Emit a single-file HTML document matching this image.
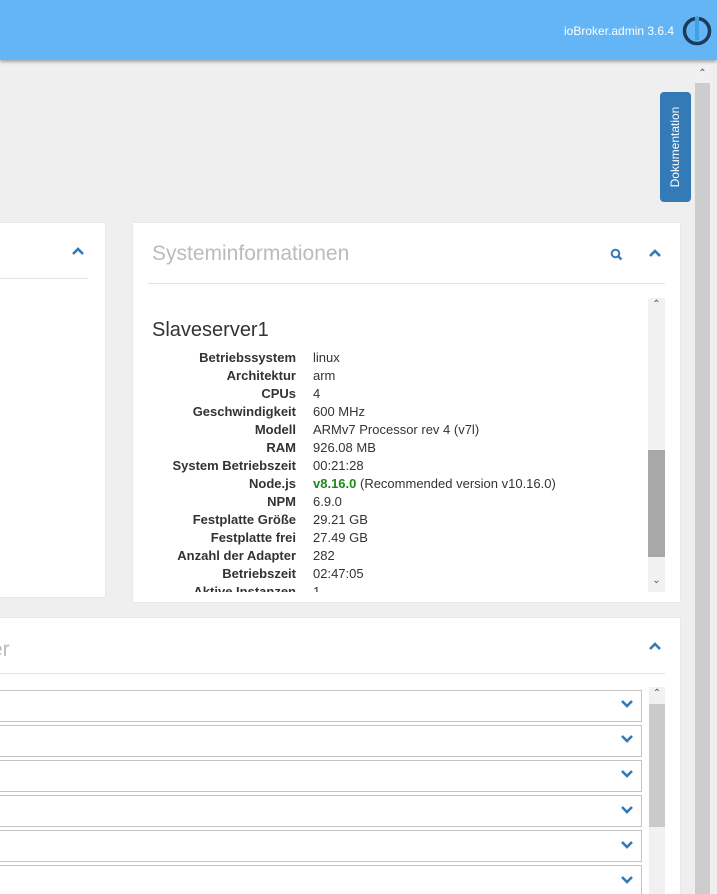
<!DOCTYPE html>
<html style="overflow:hidden;width:717px;height:894px"><head><meta charset="utf-8"><style>
*{box-sizing:border-box;margin:0;padding:0}
body{width:717px;height:894px;overflow:hidden;background:#efefef;font-family:"Liberation Sans",Arial,sans-serif;position:relative}
.hdr{position:absolute;left:0;top:0;width:717px;height:60px;background:#64b5f6;box-shadow:0 2px 3px rgba(0,0,0,.3);z-index:2}
.hdr .t{position:absolute;left:564px;top:24px;color:#fff;font-size:12px}
.card{position:absolute;background:#fff;box-shadow:0 0 1px rgba(0,0,0,.15);overflow:hidden}
.abs{position:absolute}
.ttl{color:#bbb;font-size:21px}
.div{position:absolute;height:1px;background:#e4e4e4}
table{border-collapse:collapse;font-size:13px;color:#333}
td{height:18px;padding:0;line-height:18px;white-space:nowrap}
td.l{font-weight:bold;text-align:right;width:180px;padding-right:17px}
.row{position:absolute;left:-1px;width:643px;height:32px;border:1px solid #c4c4c4;background:#fff}
</style></head><body>
<div class="hdr"><span class="t">ioBroker.admin 3.6.4</span>
<svg class="abs" style="left:680px;top:14px" width="34" height="34" viewBox="0 0 34 34"><circle cx="17" cy="17" r="12.5" fill="none" stroke="#1c3a5a" stroke-width="3.5"/><rect x="15" y="3" width="4" height="23" fill="#3fa1e0"/></svg>
</div>
<div class="abs" style="left:695px;top:63px;width:15px;height:831px;background:#cdcdcd"></div>
<div class="abs" style="left:695px;top:63px;width:15px;height:20px;background:#f0f0f0;color:#555;font-size:10px;text-align:center;line-height:22px">&#8963;</div>
<div class="abs" style="left:660px;top:92px;width:31px;height:110px;background:#337ab7;border-radius:4px"></div>
<div class="abs" style="left:675px;top:147px;transform:translate(-50%,-50%) rotate(-90deg);color:#fff;font-size:12px;white-space:nowrap">Dokumentation</div>
<div class="card" style="left:-5px;top:223px;width:110px;height:374px">
<svg class="abs" style="left:76px;top:23px" width="14" height="10" viewBox="0 0 14 10"><path d="M2 8L7 3L12 8" fill="none" stroke="#337ab7" stroke-width="2.6"/></svg>
<div class="div" style="left:0;top:55px;width:93px"></div></div>
<div class="card" style="left:133px;top:223px;width:547px;height:379px">
<div class="abs ttl" style="left:19px;top:19px">Systeminformationen</div>
<svg class="abs" style="left:477px;top:25px" width="13" height="13" viewBox="0 0 13 13"><circle cx="5.5" cy="5.5" r="3.8" fill="none" stroke="#337ab7" stroke-width="2"/><path d="M8.3 8.3L11.5 11.5" stroke="#337ab7" stroke-width="2.4"/></svg>
<svg class="abs" style="left:515px;top:25px" width="14" height="10" viewBox="0 0 14 10"><path d="M2 8L7 3L12 8" fill="none" stroke="#337ab7" stroke-width="2.6"/></svg>
<div class="div" style="left:15px;top:60px;width:517px"></div>
<div class="abs" style="left:515px;top:75px;width:17px;height:294px;background:#f1f1f1"></div>
<div class="abs" style="left:515px;top:227px;width:17px;height:107px;background:#a8a8a8"></div>
<div class="abs" style="left:515px;top:76px;width:17px;color:#555;font-size:10px;text-align:center">&#8963;</div>
<div class="abs" style="left:515px;top:352px;width:17px;color:#555;font-size:10px;text-align:center">&#8964;</div>
<div class="abs" style="left:0;top:75px;width:515px;height:294px;overflow:hidden">
<div class="abs" style="left:19px;top:21px;font-size:20px;color:#333">Slaveserver1</div>
<table class="abs" style="left:0;top:51px">
<tr><td class="l">Betriebssystem</td><td>linux</td></tr>
<tr><td class="l">Architektur</td><td>arm</td></tr>
<tr><td class="l">CPUs</td><td>4</td></tr>
<tr><td class="l">Geschwindigkeit</td><td>600 MHz</td></tr>
<tr><td class="l">Modell</td><td>ARMv7 Processor rev 4 (v7l)</td></tr>
<tr><td class="l">RAM</td><td>926.08 MB</td></tr>
<tr><td class="l">System Betriebszeit</td><td>00:21:28</td></tr>
<tr><td class="l">Node.js</td><td><b style="color:#1e8a1e">v8.16.0</b> (Recommended version v10.16.0)</td></tr>
<tr><td class="l">NPM</td><td>6.9.0</td></tr>
<tr><td class="l">Festplatte Größe</td><td>29.21 GB</td></tr>
<tr><td class="l">Festplatte frei</td><td>27.49 GB</td></tr>
<tr><td class="l">Anzahl der Adapter</td><td>282</td></tr>
<tr><td class="l">Betriebszeit</td><td>02:47:05</td></tr>
<tr><td class="l">Aktive Instanzen</td><td>1</td></tr>
</table></div>
</div>
<div class="card" style="left:-5px;top:618px;width:685px;height:276px">
<div class="abs ttl" style="left:-4px;top:20px">er</div>
<svg class="abs" style="left:653px;top:23px" width="14" height="10" viewBox="0 0 14 10"><path d="M2 8L7 3L12 8" fill="none" stroke="#337ab7" stroke-width="2.6"/></svg>
<div class="div" style="left:0;top:55px;width:670px"></div>
<div class="abs" style="left:654px;top:69px;width:16px;height:230px;background:#f1f1f1"></div>
<div class="abs" style="left:654px;top:86px;width:16px;height:123px;background:#cacaca"></div>
<div class="abs" style="left:654px;top:70px;width:16px;color:#555;font-size:10px;text-align:center">&#8963;</div>
</div>
<div class="abs" style="left:0;top:0;width:717px;height:894px;overflow:hidden">
<div class="row" style="top:690px"></div>
<div class="row" style="top:725px"></div>
<div class="row" style="top:760px"></div>
<div class="row" style="top:795px"></div>
<div class="row" style="top:830px"></div>
<div class="row" style="top:865px"></div>
</div>
<svg class="abs" style="left:620px;top:698px" width="16" height="190" viewBox="0 0 16 190">
<g fill="none" stroke="#337ab7" stroke-width="2.6">
<path d="M2 3L7 8L12 3"/><path d="M2 38L7 43L12 38"/><path d="M2 73L7 78L12 73"/><path d="M2 109L7 114L12 109"/><path d="M2 144L7 149L12 144"/><path d="M2 179L7 184L12 179"/></g></svg>
</body></html>
